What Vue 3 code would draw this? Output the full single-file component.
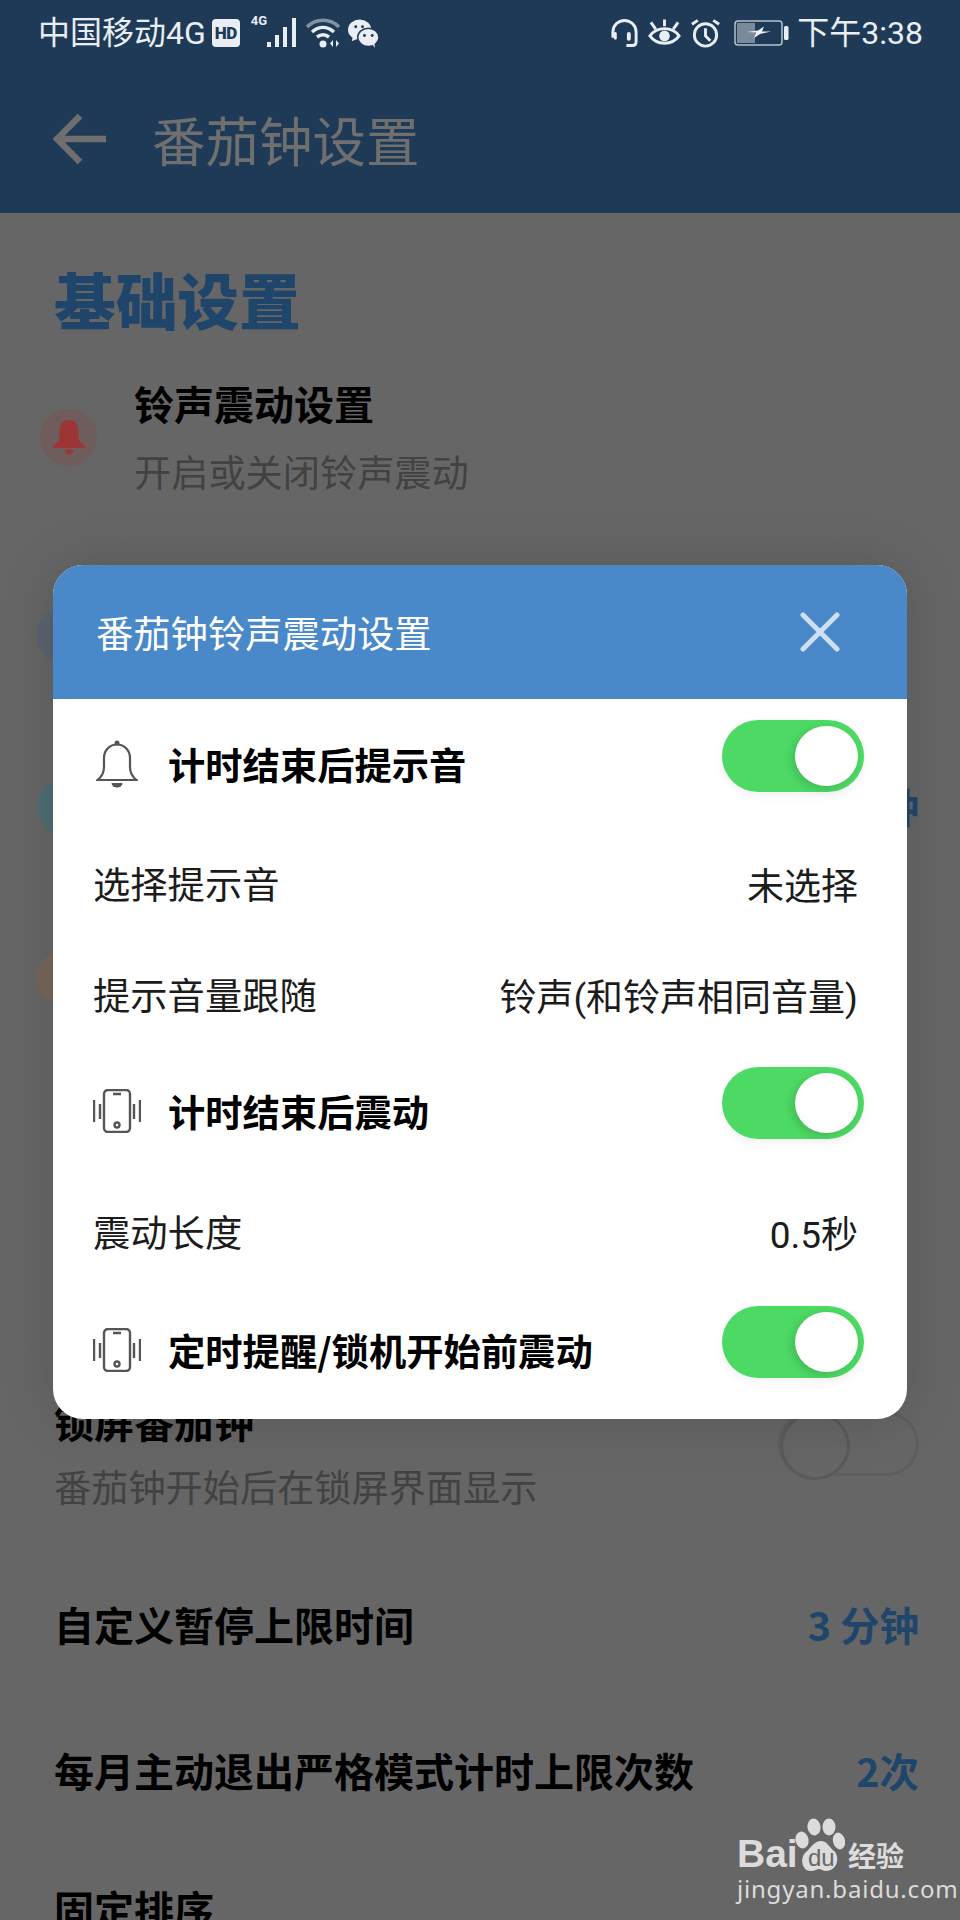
<script setup>
const bgRows = [
  { tint: 'slate', value: '' },
  { tint: 'teal', value: '25 分钟' },
  { tint: 'brown', value: '' }
]
</script>

<template>
  <div class="screen">
    <header class="appbar">
      <svg class="back" viewBox="0 0 54 50" fill="none" stroke="#6f6f6f" stroke-width="6.5">
        <path d="M53 25H4M27 2 4 25l23 23" />
      </svg>
      <h1 class="appbar-title">番茄钟设置</h1>
    </header>

    <main class="page">
      <h2 class="section">基础设置</h2>

      <div class="icon-row first">
        <span class="circle rose">
          <svg class="solid-bell" viewBox="0 0 34 32" preserveAspectRatio="none" fill="#9c3636">
            <path d="M17 0c6.500 0 9.500 4.500 9.500 10v6c0 3 2.500 5 6.500 7.500v2H1v-2C5 21 7.500 19 7.500 16v-6C7.500 4.500 10.500 0 17 0Z" />
            <path d="M12.500 27h9a4.500 4.500 0 0 1-9 0Z" />
          </svg>
        </span>
        <div class="stack">
          <div class="item-title">铃声震动设置</div>
          <div class="item-sub">开启或关闭铃声震动</div>
        </div>
      </div>

      <div v-for="row in bgRows" :key="row.tint" class="icon-row">
        <span class="circle" :class="row.tint"></span>
        <span class="value">{{ row.value }}</span>
      </div>

      <div class="lock-row">
        <div class="lock-text">
          <div class="item-title">锁屏番茄钟</div>
          <div class="item-sub">番茄钟开始后在锁屏界面显示</div>
        </div>
        <span class="switch-off"><span class="switch-off-knob"></span></span>
      </div>

      <div class="plain-row limit">
        <span class="item-title">自定义暂停上限时间</span>
        <span class="value">3 分钟</span>
      </div>
      <div class="plain-row monthly">
        <span class="item-title">每月主动退出严格模式计时上限次数</span>
        <span class="value">2次</span>
      </div>
      <div class="plain-row fixed">
        <span class="item-title">固定排序</span>
      </div>
    </main>

    <div class="status">
      <div class="status-left">
        <span class="carrier">中国移动4G</span>
        <span class="hd">HD</span>
        <span class="tiny">4G</span>
        <svg class="signal" viewBox="0 0 30 30" fill="#e8eef4">
          <rect x="0" y="24" width="4" height="5" />
          <rect x="8" y="17" width="4" height="12" />
          <rect x="16" y="9" width="4" height="20" />
          <rect x="25" y="0" width="4" height="29" />
        </svg>
        <svg class="wifi" viewBox="0 0 36 30" fill="none" stroke-width="3.500">
          <path d="M2 9C11 0 25 0 34 9" stroke="#83929f" />
          <path d="M7 14c7-6 15-6 22 0" stroke="#e8eef4" />
          <path d="M12 19c4-3 8-3 12 0" stroke="#e8eef4" />
          <circle cx="18" cy="26" r="3.500" fill="#e8eef4" stroke="none" />
          <path d="m28 22-3 3.500 3 3.500zM31 22l3 3.500-3 3.500z" fill="#e8eef4" stroke="none" />
        </svg>
        <svg class="wechat" viewBox="0 0 32 30" fill="#e8eef4">
          <ellipse cx="12" cy="11" rx="12" ry="10.500" />
          <path d="m5 17-1 6 7-3z" />
          <ellipse cx="21" cy="19" rx="11" ry="9.500" stroke="#1f3a56" stroke-width="1.500" />
          <path d="m25 26 3 4-1-6z" />
          <circle cx="8" cy="8" r="1.500" fill="#1f3a56" />
          <circle cx="15" cy="8" r="1.500" fill="#1f3a56" />
          <circle cx="17" cy="17" r="1.500" fill="#1f3a56" />
          <circle cx="25" cy="17" r="1.500" fill="#1f3a56" />
        </svg>
      </div>
      <div class="status-right">
        <svg class="headset" viewBox="0 0 30 30" fill="none" stroke="#e8eef4" stroke-width="3">
          <path d="M3 20v-6a12 12 0 0 1 24 0v10c0 3-2 4-4 4h-6" />
          <rect x="4" y="14" width="3" height="8" rx="1.500" fill="#e8eef4" stroke="none" />
          <rect x="17.500" y="14" width="4" height="9" rx="2" fill="#e8eef4" stroke="none" />
        </svg>
        <svg class="eye" viewBox="0 0 34 30" fill="none" stroke="#e8eef4" stroke-width="3">
          <path d="M2 18c7-10 23-10 30 0-7 10-23 10-30 0Z" />
          <circle cx="17" cy="18" r="5.500" fill="#e8eef4" stroke="none" />
          <path d="M3 4l5 7M17 1v7M31 4l-5 7" />
        </svg>
        <svg class="alarm" viewBox="0 0 32 30" fill="none" stroke="#e8eef4" stroke-width="3">
          <circle cx="16" cy="17" r="11.500" />
          <path d="M16 10v8l5 5M2 6l6-4M30 6l-6-4" />
        </svg>
        <svg class="battery" viewBox="0 0 56 26" fill="none">
          <rect x="1" y="1" width="47" height="24" rx="3" stroke="#b6c2cc" stroke-width="1.500" />
          <rect x="3" y="3" width="18" height="20" fill="#7b8a9a" />
          <path d="m13 12 11-1.500 6-4-2 5h9l-11 2.500-6 4 2-5.500z" fill="#eef2f6" />
          <rect x="50" y="6" width="4.500" height="14" rx="1.500" fill="#e8eef4" />
        </svg>
        <span class="clock">下午3:38</span>
      </div>
    </div>

    <section class="dialog">
      <div class="dialog-head">
        <span class="dialog-title">番茄钟铃声震动设置</span>
        <svg class="close" viewBox="0 0 40 40" fill="none" stroke="#cfe0f3" stroke-width="5" stroke-linecap="round">
          <path d="M3 3l34 34M37 3 3 37" />
        </svg>
      </div>
      <div class="dialog-body">
        <div class="opt">
          <span class="opt-icon">
            <svg class="line-bell" viewBox="0 0 42 48" fill="none" stroke="#555" stroke-width="2.200">
              <path d="M1.500 40C6 36.500 8 33 8 27v-9C8 10 14 4.500 21 4.500S34 10 34 18v9c0 6 2 9.500 6.500 13Z" />
              <circle cx="21" cy="3" r="2.500" fill="#555" stroke="none" />
              <path d="M15.500 43h11a5.500 4.500 0 0 1-11 0Z" fill="#555" stroke="none" />
            </svg>
          </span>
          <span class="opt-title">计时结束后提示音</span>
          <span class="switch-on"><span class="switch-on-knob"></span></span>
        </div>
        <div class="opt">
          <span class="opt-label">选择提示音</span>
          <span class="opt-value">未选择</span>
        </div>
        <div class="opt">
          <span class="opt-label">提示音量跟随</span>
          <span class="opt-value">铃声(和铃声相同音量)</span>
        </div>
        <div class="opt">
          <span class="opt-icon">
            <svg class="phone" viewBox="0 0 48 44" fill="none" stroke="#555" stroke-width="2.400">
              <rect x="11" y="1" width="26" height="42" rx="4" />
              <path d="M20 5h8" stroke-width="2.500" />
              <circle cx="24" cy="36" r="2.500" />
              <path d="M1 11v22M7 15v15M41 15v15M47 11v22" />
            </svg>
          </span>
          <span class="opt-title">计时结束后震动</span>
          <span class="switch-on"><span class="switch-on-knob"></span></span>
        </div>
        <div class="opt">
          <span class="opt-label">震动长度</span>
          <span class="opt-value">0.5秒</span>
        </div>
        <div class="opt">
          <span class="opt-icon">
            <svg class="phone" viewBox="0 0 48 44" fill="none" stroke="#555" stroke-width="2.400">
              <rect x="11" y="1" width="26" height="42" rx="4" />
              <path d="M20 5h8" stroke-width="2.500" />
              <circle cx="24" cy="36" r="2.500" />
              <path d="M1 11v22M7 15v15M41 15v15M47 11v22" />
            </svg>
          </span>
          <span class="opt-title">定时提醒/锁机开始前震动</span>
          <span class="switch-on"><span class="switch-on-knob"></span></span>
        </div>
      </div>
    </section>

    <div class="mark">
      <div class="mark-top">
        <span class="mark-bai">Bai</span>
        <span class="mark-paw">
          <svg class="paw" viewBox="0 0 50 54" fill="#dcdcdc">
            <ellipse cx="7" cy="22" rx="6.500" ry="8.500" transform="rotate(-12 7 22)" />
            <ellipse cx="19" cy="9" rx="6.500" ry="8.500" transform="rotate(-8 19 9)" />
            <ellipse cx="34" cy="9" rx="6.500" ry="8.500" />
            <ellipse cx="44" cy="23" rx="6" ry="8.500" transform="rotate(-14 44 23)" />
            <path d="M26 23c6 0 8 6 13 10 6 5 4 20-8 20-3 0-5-2-7-2s-4 2-8 2C6 53 5 39 11 34c5-4 8-11 15-11Z" />
          </svg>
          <span class="mark-du">du</span>
        </span>
        <span class="mark-cn">经验</span>
      </div>
      <div class="mark-url">jingyan.baidu.com</div>
    </div>
  </div>
</template>

<style scoped>
.screen {
  position: relative;
  width: 960px;
  height: 1920px;
  overflow: hidden;
  background: #666;
  font-family: Roboto, "Noto Sans CJK SC", sans-serif;
}
.appbar {
  display: flex;
  align-items: center;
  height: 213px;
  box-sizing: border-box;
  padding: 65px 0 0 53px;
  background: #1f3a56;
}
.back { width: 54px; height: 50px; }
.appbar-title {
  margin: 0 0 0 45px;
  font-size: 53.500px;
  font-weight: 400;
  line-height: 74px;
  color: #6f6f6f;
  font-family: "Noto Sans CJK SC", sans-serif;
}
.page {
  display: flex;
  flex-direction: column;
  padding: 0 41px 0 37px;
  font-family: "Noto Sans CJK SC", sans-serif;
}
.section {
  margin: 48px 0 0 17px;
  font-size: 61.700px;
  font-weight: 900;
  line-height: 74px;
  color: #20456b;
}
.icon-row {
  display: flex;
  align-items: center;
  height: 116px;
  margin-top: 55px;
}
.icon-row.first { margin-top: 44px; margin-bottom: 27px; padding-left: 3px; gap: 37px; }
.circle {
  display: flex;
  align-items: center;
  justify-content: center;
  flex: none;
  width: 57px;
  height: 57px;
  border-radius: 50%;
}
.rose { background: #6f5c5c; }
.slate { background: #5d6270; }
.teal { background: #4f6f73; }
.brown { background: #76655a; }
.solid-bell { width: 34px; height: 35px; }
.stack { display: flex; flex-direction: column; gap: 20px; }
.item-title {
  font-size: 40px;
  font-weight: 700;
  line-height: 48px;
  color: #000;
  white-space: nowrap;
}
.item-sub {
  font-size: 37.200px;
  line-height: 48px;
  color: #424242;
  white-space: nowrap;
}
.value {
  margin-left: auto;
  font-size: 39.500px;
  font-weight: 700;
  line-height: 48px;
  color: #20456b;
  white-space: nowrap;
}
.lock-row {
  display: flex;
  align-items: flex-start;
  margin-top: 362px;
  padding-left: 17px;
}
.lock-text { display: flex; flex-direction: column; gap: 17px; }
.switch-off {
  position: relative;
  flex: none;
  width: 141px;
  height: 64px;
  margin: 15px 0 0 auto;
  box-sizing: border-box;
  border: 3px solid #5e5e5e;
  border-radius: 32px;
}
.switch-off-knob {
  position: absolute;
  left: -1px;
  top: -3px;
  width: 70px;
  height: 68px;
  box-sizing: border-box;
  border: 3px solid #5a5a5a;
  border-radius: 50%;
  background: #666;
}
.plain-row {
  display: flex;
  align-items: center;
  padding-left: 17px;
}
.limit { margin-top: 90px; }
.monthly { margin-top: 98px; }
.fixed { margin-top: 90px; }
.status {
  position: absolute;
  left: 0;
  top: 0;
  width: 960px;
  height: 66px;
  display: flex;
  align-items: center;
  justify-content: space-between;
  padding: 0 37px 0 38px;
  box-sizing: border-box;
  color: #e8eef4;
}
.status-left, .status-right { display: flex; align-items: center; }
.carrier, .clock {
  font-size: 32px;
  line-height: 40px;
  white-space: nowrap;
}
.hd {
  width: 28px;
  height: 28px;
  margin-left: 6px;
  border-radius: 4px;
  background: #e8eef4;
  color: #1f3a56;
  font-size: 17px;
  font-weight: 900;
  line-height: 28px;
  text-align: center;
  letter-spacing: -0.500px;
}
.tiny {
  align-self: flex-start;
  margin: 1px 0 0 11px;
  font-size: 13px;
  font-weight: 700;
  line-height: 14px;
}
.signal { width: 30px; height: 30px; }
.wifi { width: 36px; height: 30px; margin-left: 8px; }
.wechat { width: 31px; height: 29px; margin-left: 7px; }
.headset { width: 29px; height: 30px; }
.eye { width: 33px; height: 30px; margin-left: 9px; }
.alarm { width: 31px; height: 30px; margin-left: 9px; }
.battery { width: 56px; height: 26px; margin-left: 13px; }
.clock { margin-left: 7px; }
.dialog {
  position: absolute;
  left: 53px;
  top: 565px;
  width: 854px;
  height: 854px;
  overflow: hidden;
  border-radius: 30px;
  background: #fff;
  box-shadow: 0 0 60px rgba(0, 0, 0, 0.14);
  font-family: "Noto Sans CJK SC", sans-serif;
}
.dialog-head {
  display: flex;
  align-items: center;
  justify-content: space-between;
  height: 134px;
  padding: 0 67px 0 43px;
  box-sizing: border-box;
  background: #4a89c9;
}
.dialog-title {
  font-size: 37.300px;
  line-height: 46px;
  color: #fff;
}
.close { width: 40px; height: 40px; }
.dialog-body {
  display: grid;
  grid-template-rows: 130px 108px 114px 120px 120px 118px;
}
.opt {
  display: flex;
  align-items: center;
  padding: 0 43px 0 40px;
}
.opt-icon {
  display: flex;
  align-items: center;
  flex: none;
  width: 75px;
}
.line-bell { width: 42px; height: 48px; margin-left: 3px; }
.phone { width: 48px; height: 44px; }
.opt-title {
  font-size: 37.300px;
  font-weight: 700;
  line-height: 48px;
  color: #000;
  white-space: nowrap;
}
.opt-label {
  font-size: 37.300px;
  line-height: 48px;
  color: #1c1c1c;
}
.opt-value {
  margin: 10px 6px 0 auto;
  font-family: Roboto, "Noto Sans CJK SC", sans-serif;
  font-size: 37px;
  line-height: 48px;
  color: #1c1c1c;
  white-space: nowrap;
}
.switch-on {
  position: relative;
  flex: none;
  width: 142px;
  height: 72px;
  margin: 0 0 16px auto;
  border-radius: 36px;
  background: #4cd964;
  box-shadow: 0 4px 10px rgba(0, 0, 0, 0.05);
}
.switch-on-knob {
  position: absolute;
  right: 6px;
  top: 6px;
  width: 63px;
  height: 60px;
  border-radius: 50%;
  background: #fff;
  box-shadow: -3px 3px 9px rgba(0, 0, 0, 0.14);
}
.mark {
  position: absolute;
  left: 737px;
  top: 1818px;
  width: 172px;
  color: #dcdcdc;
}
.mark-top { display: flex; align-items: flex-end; height: 54px; }
.mark-bai {
  font-family: "Liberation Sans", sans-serif;
  font-size: 39px;
  font-weight: 700;
  line-height: 36px;
  width: 58px;
  white-space: nowrap;
}
.mark-paw { position: relative; display: block; flex: none; width: 50px; height: 54px; }
.paw { display: block; width: 50px; height: 54px; }
.mark-du {
  position: absolute;
  left: 13px;
  top: 27px;
  font-family: "Liberation Sans", sans-serif;
  font-size: 24px;
  line-height: 26px;
  color: #666;
}
.mark-cn {
  margin-left: 3px;
  font-family: "Noto Sans CJK SC", sans-serif;
  font-size: 28px;
  font-weight: 700;
  line-height: 34px;
  white-space: nowrap;
}
.mark-url {
  margin-top: 3px;
  font-family: "Noto Sans", sans-serif;
  font-size: 24px;
  line-height: 28px;
  letter-spacing: 0.800px;
  white-space: nowrap;
}
</style>
